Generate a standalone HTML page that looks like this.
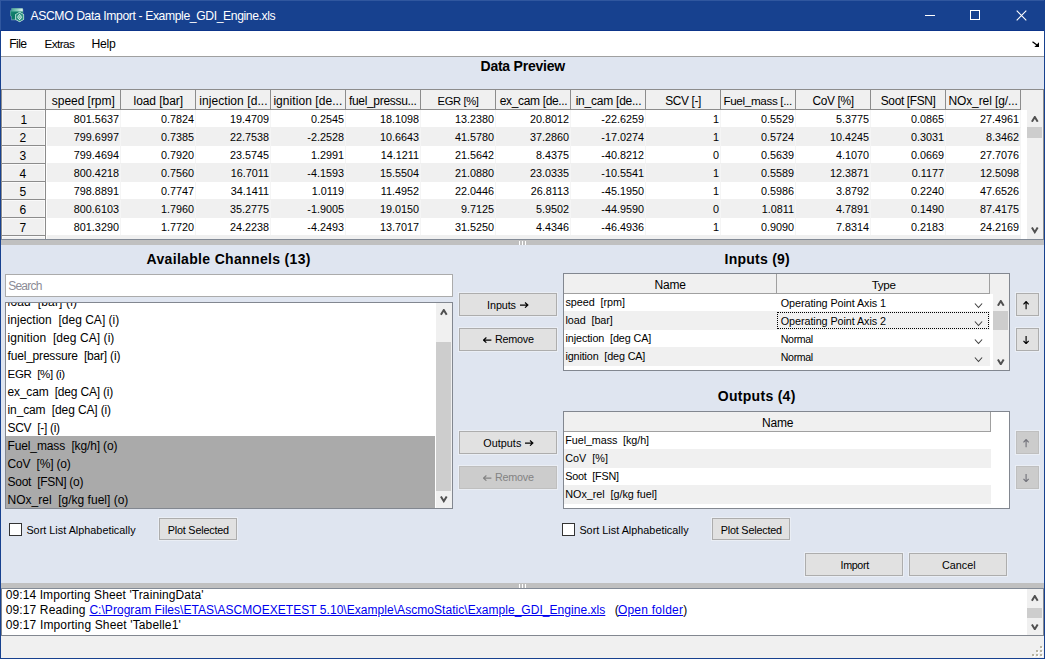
<!DOCTYPE html>
<html>
<head>
<meta charset="utf-8">
<title>ASCMO Data Import</title>
<style>
*{box-sizing:border-box;margin:0;padding:0}
html,body{width:1045px;height:659px;overflow:hidden;background:#dfe5f0}
body{font-family:"Liberation Sans",sans-serif;font-size:11px;color:#000;position:relative}
div,span,svg{position:absolute}
a{color:#0000ee;text-decoration:underline;position:static}
#win{left:0;top:0;width:1045px;height:659px;background:#dfe5f0;overflow:hidden}
#titlebar{left:0;top:0;width:1045px;height:31px;background:#17418f}
#menubar{left:1px;top:31px;width:1043px;height:25px;background:#fff}
#menuline{left:1px;top:56px;width:1043px;height:1px;background:#a0a0a0}
.bl{background:#17418f}
#dt{left:1px;top:89px;width:1043px;height:150px;background:#fff;overflow:hidden}
#dthead{left:0;top:0;width:1043px;height:21px;background:#f0f0f0;border-top:1px solid #8c8c8c}
.hc{top:1px;height:20px;border-right:1px solid #8c8c8c;border-bottom:1px solid #8c8c8c}
.rh{left:1px;width:44px;height:18px;background:#f0f0f0;border-right:1px solid #8c8c8c;border-bottom:1px solid #8c8c8c;box-shadow:inset -1px 0 0 #fafafa,inset 0 1px 0 #fafafa,inset 1px 0 0 #fafafa}
.row{left:45px;width:975px;height:18px}
.row.alt{background:#f0f0f0;box-shadow:inset 1px 0 0 #fff;margin-top:-1px;height:19px}
.row.alt .c{top:1px}
.c{top:0;width:75px;height:18px;text-align:right;padding-right:1.1px;font-size:10.8px;line-height:18px;border-right:1px solid #f5f5f5}
.btn{background:#e1e1e1;border:1px solid #adadad;box-shadow:0 0 0 1px rgba(255,255,255,0.35)}
.btn.dis{background:#cccccc;border-color:#bfbfbf}
.cb{width:13px;height:13px;background:#fff;border:1px solid #333}
.sb{background:#f0f0f0}
.thumb{background:#cdcdcd}
.box{background:#fff;border:1px solid #828790;overflow:hidden}
.th{background:#f0f0f0;border-right:1px solid #a0a0a0;border-bottom:1px solid #a0a0a0;height:20px;top:0}
.tr{height:18px}
.tr.alt{background:#f0f0f0}
</style>
</head>
<body>
<div id="win">
<div id="titlebar"></div>
<div style="left:0;top:30px;width:1045px;height:1px;background:#0d358a"></div>
<div style="left:0;top:0;width:1045px;height:1px;background:#30579f"></div>
<svg style="left:9px;top:7px" width="17" height="17" viewBox="-1 -1 17 17">
<defs>
<linearGradient id="ga" x1="0" y1="0" x2="1" y2="0"><stop offset="0" stop-color="#3fa38f"/><stop offset="0.55" stop-color="#8fd0c1"/><stop offset="1" stop-color="#e9f7f3"/></linearGradient>
<linearGradient id="gb" x1="0" y1="0" x2="1" y2="1"><stop offset="0" stop-color="#1f8d7a"/><stop offset="0.5" stop-color="#0b7765"/><stop offset="1" stop-color="#2e9683"/></linearGradient>
</defs>
<path d="M1.6 0 L12 0 Q13.2 0 13.2 1.2 L13.2 12.2 L1.2 12.2 L1.2 8.4 L0 8 L0 2.8 L1.2 2.2 Z" fill="#cfe9e2" opacity="0.55"/>
<path d="M1.9 0.5 L11.9 0.5 Q12.8 0.5 12.8 1.4 L12.8 11.6 L1.7 11.6 L1.7 8 L0.5 7.7 L0.5 3 L1.7 2.5 Z" fill="url(#gb)"/>
<path d="M1.9 0.5 L11.9 0.5 Q12.8 0.5 12.8 1.4 L12.8 3.6 L0.6 3.6 L0.5 3 L1.7 2.5 Z" fill="url(#ga)"/>
<path d="M9.6 3.8 L14.1 6.4 L14.1 11.6 L9.6 14.2 L5.1 11.6 L5.1 6.4 Z" fill="#d9eee9"/>
<path d="M9.6 4.6 L13.4 6.8 L13.4 11.2 L9.6 13.4 L5.8 11.2 L5.8 6.8 Z" fill="#2d9381"/>
<path d="M9.6 5.6 L12.5 9 L9.6 12.4 L6.7 9 Z" fill="#57ad9c"/>
<g fill="#f2faf8"><rect x="9.1" y="6.2" width="1" height="1"/><rect x="8.1" y="7.4" width="1" height="1"/><rect x="10.1" y="7.4" width="1" height="1"/><rect x="7.3" y="8.6" width="0.9" height="1"/><rect x="9.1" y="8.6" width="1" height="1"/><rect x="10.9" y="8.6" width="1" height="1"/><rect x="8.1" y="9.8" width="1" height="1"/><rect x="10.1" y="9.8" width="1" height="1"/><rect x="9.1" y="11" width="1" height="0.9"/></g>
</svg>
<div style="left:30.50px;top:9px;font-size:12.2px;line-height:14px;white-space:pre;letter-spacing:-0.396px;color:#fff">ASCMO Data Import - Example_GDI_Engine.xls</div>
<svg style="left:925px;top:10px" width="12" height="12" viewBox="0 0 12 12"><rect x="0" y="5" width="10" height="1" fill="#fff"/></svg>
<svg style="left:969px;top:9px" width="12" height="12" viewBox="0 0 12 12"><rect x="1.5" y="1.5" width="9" height="9" fill="none" stroke="#fff" stroke-width="1"/></svg>
<svg style="left:1015.7px;top:9.5px" width="12" height="12" viewBox="0 0 12 12"><path d="M0.7 0.7 L10.3 10.3 M10.3 0.7 L0.7 10.3" stroke="#fff" stroke-width="1.1" fill="none"/></svg>
<div id="menubar"></div><div id="menuline"></div>
<div style="left:9.30px;top:37px;font-size:12.2px;line-height:14px;white-space:pre;letter-spacing:-0.648px">File</div>
<div style="left:44.50px;top:37px;font-size:11.82px;line-height:14px;white-space:pre;letter-spacing:-0.600px">Extras</div>
<div style="left:91.40px;top:37px;font-size:12.2px;line-height:14px;white-space:pre;letter-spacing:-0.259px">Help</div>
<svg style="left:1032px;top:40.5px" width="8" height="7" viewBox="0 0 8 7"><path d="M0.5 0.8 L6.2 5" stroke="#000" stroke-width="1.3" fill="none"/><path d="M7 1.2 L7 6 L2.4 6 Z" fill="#000"/></svg>
<div style="left:480.50px;top:58px;font-size:14px;line-height:16px;white-space:pre;letter-spacing:-0.235px;font-weight:bold">Data Preview</div>
<div id="dt"><div id="dthead"></div>
<div class="hc" style="left:0;width:45px"></div>
<div class="hc" style="left:45px;width:75px"></div>
<div class="hc" style="left:120px;width:75px"></div>
<div class="hc" style="left:195px;width:75px"></div>
<div class="hc" style="left:270px;width:75px"></div>
<div class="hc" style="left:345px;width:75px"></div>
<div class="hc" style="left:420px;width:75px"></div>
<div class="hc" style="left:495px;width:75px"></div>
<div class="hc" style="left:570px;width:75px"></div>
<div class="hc" style="left:645px;width:75px"></div>
<div class="hc" style="left:720px;width:75px"></div>
<div class="hc" style="left:795px;width:75px"></div>
<div class="hc" style="left:870px;width:75px"></div>
<div class="hc" style="left:945px;width:75px"></div>
<div class="rh" style="top:21px"></div>
<div class="row" style="top:21px">
<div class="c" style="left:0px">801.5637</div>
<div class="c" style="left:75px">0.7824</div>
<div class="c" style="left:150px">19.4709</div>
<div class="c" style="left:225px">0.2545</div>
<div class="c" style="left:300px">18.1098</div>
<div class="c" style="left:375px">13.2380</div>
<div class="c" style="left:450px">20.8012</div>
<div class="c" style="left:525px">-22.6259</div>
<div class="c" style="left:600px">1</div>
<div class="c" style="left:675px">0.5529</div>
<div class="c" style="left:750px">5.3775</div>
<div class="c" style="left:825px">0.0865</div>
<div class="c" style="left:900px">27.4961</div>
</div>
<div class="rh" style="top:39px"></div>
<div class="row alt" style="top:39px">
<div class="c" style="left:0px">799.6997</div>
<div class="c" style="left:75px">0.7385</div>
<div class="c" style="left:150px">22.7538</div>
<div class="c" style="left:225px">-2.2528</div>
<div class="c" style="left:300px">10.6643</div>
<div class="c" style="left:375px">41.5780</div>
<div class="c" style="left:450px">37.2860</div>
<div class="c" style="left:525px">-17.0274</div>
<div class="c" style="left:600px">1</div>
<div class="c" style="left:675px">0.5724</div>
<div class="c" style="left:750px">10.4245</div>
<div class="c" style="left:825px">0.3031</div>
<div class="c" style="left:900px">8.3462</div>
</div>
<div class="rh" style="top:57px"></div>
<div class="row" style="top:57px">
<div class="c" style="left:0px">799.4694</div>
<div class="c" style="left:75px">0.7920</div>
<div class="c" style="left:150px">23.5745</div>
<div class="c" style="left:225px">1.2991</div>
<div class="c" style="left:300px">14.1211</div>
<div class="c" style="left:375px">21.5642</div>
<div class="c" style="left:450px">8.4375</div>
<div class="c" style="left:525px">-40.8212</div>
<div class="c" style="left:600px">0</div>
<div class="c" style="left:675px">0.5639</div>
<div class="c" style="left:750px">4.1070</div>
<div class="c" style="left:825px">0.0669</div>
<div class="c" style="left:900px">27.7076</div>
</div>
<div class="rh" style="top:75px"></div>
<div class="row alt" style="top:75px">
<div class="c" style="left:0px">800.4218</div>
<div class="c" style="left:75px">0.7560</div>
<div class="c" style="left:150px">16.7011</div>
<div class="c" style="left:225px">-4.1593</div>
<div class="c" style="left:300px">15.5504</div>
<div class="c" style="left:375px">21.0880</div>
<div class="c" style="left:450px">23.0335</div>
<div class="c" style="left:525px">-10.5541</div>
<div class="c" style="left:600px">1</div>
<div class="c" style="left:675px">0.5589</div>
<div class="c" style="left:750px">12.3871</div>
<div class="c" style="left:825px">0.1177</div>
<div class="c" style="left:900px">12.5098</div>
</div>
<div class="rh" style="top:93px"></div>
<div class="row" style="top:93px">
<div class="c" style="left:0px">798.8891</div>
<div class="c" style="left:75px">0.7747</div>
<div class="c" style="left:150px">34.1411</div>
<div class="c" style="left:225px">1.0119</div>
<div class="c" style="left:300px">11.4952</div>
<div class="c" style="left:375px">22.0446</div>
<div class="c" style="left:450px">26.8113</div>
<div class="c" style="left:525px">-45.1950</div>
<div class="c" style="left:600px">1</div>
<div class="c" style="left:675px">0.5986</div>
<div class="c" style="left:750px">3.8792</div>
<div class="c" style="left:825px">0.2240</div>
<div class="c" style="left:900px">47.6526</div>
</div>
<div class="rh" style="top:111px"></div>
<div class="row alt" style="top:111px">
<div class="c" style="left:0px">800.6103</div>
<div class="c" style="left:75px">1.7960</div>
<div class="c" style="left:150px">35.2775</div>
<div class="c" style="left:225px">-1.9005</div>
<div class="c" style="left:300px">19.0150</div>
<div class="c" style="left:375px">9.7125</div>
<div class="c" style="left:450px">5.9502</div>
<div class="c" style="left:525px">-44.9590</div>
<div class="c" style="left:600px">0</div>
<div class="c" style="left:675px">1.0811</div>
<div class="c" style="left:750px">4.7891</div>
<div class="c" style="left:825px">0.1490</div>
<div class="c" style="left:900px">87.4175</div>
</div>
<div class="rh" style="top:129px"></div>
<div class="row" style="top:129px">
<div class="c" style="left:0px">801.3290</div>
<div class="c" style="left:75px">1.7720</div>
<div class="c" style="left:150px">24.2238</div>
<div class="c" style="left:225px">-4.2493</div>
<div class="c" style="left:300px">13.7017</div>
<div class="c" style="left:375px">31.5250</div>
<div class="c" style="left:450px">4.4346</div>
<div class="c" style="left:525px">-46.4936</div>
<div class="c" style="left:600px">1</div>
<div class="c" style="left:675px">0.9090</div>
<div class="c" style="left:750px">7.8314</div>
<div class="c" style="left:825px">0.2183</div>
<div class="c" style="left:900px">24.2169</div>
</div>
<div class="rh" style="top:147px"></div>
<div class="row alt" style="top:147px">
</div>
<div class="sb" style="left:1026px;top:21px;width:16px;height:129px"></div>
<div class="thumb" style="left:1026px;top:38px;width:15px;height:11px"></div>
<svg style="left:1030px;top:26.5px" width="7.6" height="6.7" viewBox="0 0 7.6 6.7"><polyline points="0.9,5.7 3.8,1.0 6.699999999999999,5.7" fill="none" stroke="#505050" stroke-width="2.0"/></svg>
<svg style="left:1030px;top:138px" width="7.6" height="6.7" viewBox="0 0 7.6 6.7"><polyline points="0.9,0.5 3.8,5.2 6.699999999999999,0.5" fill="none" stroke="#505050" stroke-width="2.0"/></svg>
</div>
<div style="left:51.80px;top:94px;font-size:12.0px;line-height:14px;white-space:pre;letter-spacing:-0.039px">speed [rpm]</div>
<div style="left:133.55px;top:94px;font-size:12.0px;line-height:14px;white-space:pre;letter-spacing:-0.062px">load [bar]</div>
<div style="left:199.20px;top:94px;font-size:12.0px;line-height:14px;white-space:pre;letter-spacing:0.072px">injection [d...</div>
<div style="left:273.40px;top:94px;font-size:12.0px;line-height:14px;white-space:pre;letter-spacing:0.059px">ignition [de...</div>
<div style="left:348.90px;top:94px;font-size:12.0px;line-height:14px;white-space:pre;letter-spacing:-0.313px">fuel_pressu...</div>
<div style="left:437.60px;top:94px;font-size:11.18px;line-height:14px;white-space:pre;letter-spacing:-0.352px">EGR [%]</div>
<div style="left:499.70px;top:94px;font-size:12.0px;line-height:14px;white-space:pre;letter-spacing:-0.338px">ex_cam [de...</div>
<div style="left:575.70px;top:94px;font-size:12.0px;line-height:14px;white-space:pre;letter-spacing:-0.236px">in_cam [de...</div>
<div style="left:665.15px;top:94px;font-size:11.91px;line-height:14px;white-space:pre;letter-spacing:-0.351px">SCV [-]</div>
<div style="left:723.40px;top:94px;font-size:11.69px;line-height:14px;white-space:pre;letter-spacing:-0.349px">Fuel_mass [...</div>
<div style="left:812.50px;top:94px;font-size:11.91px;line-height:14px;white-space:pre;letter-spacing:-0.352px">CoV [%]</div>
<div style="left:880.80px;top:94px;font-size:11.88px;line-height:14px;white-space:pre;letter-spacing:-0.348px">Soot [FSN]</div>
<div style="left:948.40px;top:94px;font-size:12.0px;line-height:14px;white-space:pre;letter-spacing:-0.093px">NOx_rel [g/...</div>
<div style="left:20.45px;top:113px;font-size:12px;line-height:14px;white-space:pre">1</div>
<div style="left:19.45px;top:131px;font-size:12px;line-height:14px;white-space:pre">2</div>
<div style="left:19.45px;top:149px;font-size:12px;line-height:14px;white-space:pre">3</div>
<div style="left:19.45px;top:167px;font-size:12px;line-height:14px;white-space:pre">4</div>
<div style="left:19.45px;top:185px;font-size:12px;line-height:14px;white-space:pre">5</div>
<div style="left:19.45px;top:203px;font-size:12px;line-height:14px;white-space:pre">6</div>
<div style="left:19.45px;top:221px;font-size:12px;line-height:14px;white-space:pre">7</div>
<div style="left:1px;top:89px;width:1px;height:150px;background:#8e8e8e"></div>
<div style="left:1043px;top:89px;width:1px;height:150px;background:#8e8e8e"></div>
<div style="left:1px;top:239px;width:1043px;height:1px;background:#828a96"></div>
<div style="left:1px;top:240px;width:1043px;height:5px;background:#c0c0c0"></div>
<div style="left:519px;top:241px;width:1px;height:4px;background:#fff"></div>
<div style="left:522px;top:241px;width:1px;height:4px;background:#fff"></div>
<div style="left:525px;top:241px;width:1px;height:4px;background:#fff"></div>
<div style="left:146.50px;top:251px;font-size:14px;line-height:16px;white-space:pre;letter-spacing:0.333px;font-weight:bold">Available Channels (13)</div>
<div style="left:5px;top:274px;width:448px;height:23px;background:#fff;border:1px solid #ababab"></div>
<div style="left:8.20px;top:279px;font-size:12.0px;line-height:14px;white-space:pre;letter-spacing:-0.782px;color:#8c8c96">Search</div>
<div class="box" style="left:5px;top:302px;width:448px;height:207px">
<div style="left:0;top:133px;width:429px;height:72px;background:#aaaaaa"></div>
<div class="sb" style="left:430px;top:0;width:16px;height:205px"></div>
<div class="thumb" style="left:430px;top:39px;width:15px;height:149px"></div>
<svg style="left:434px;top:6px" width="7.6" height="6.7" viewBox="0 0 7.6 6.7"><polyline points="0.9,5.7 3.8,1.0 6.699999999999999,5.7" fill="none" stroke="#505050" stroke-width="2.0"/></svg>
<svg style="left:434px;top:193px" width="7.6" height="6.7" viewBox="0 0 7.6 6.7"><polyline points="0.9,0.5 3.8,5.2 6.699999999999999,0.5" fill="none" stroke="#505050" stroke-width="2.0"/></svg>
</div>
<div style="left:6px;top:303px;width:430px;height:205px;overflow:hidden">
<div style="left:1.60px;top:-8px;font-size:12.0px;line-height:14px;white-space:pre;letter-spacing:0.144px">load  [bar] (i)</div>
<div style="left:1.60px;top:10px;font-size:12.0px;line-height:14px;white-space:pre;letter-spacing:0.013px">injection  [deg CA] (i)</div>
<div style="left:1.60px;top:28px;font-size:12.0px;line-height:14px;white-space:pre;letter-spacing:0.066px">ignition  [deg CA] (i)</div>
<div style="left:1.60px;top:46px;font-size:12.0px;line-height:14px;white-space:pre;letter-spacing:-0.200px">fuel_pressure  [bar] (i)</div>
<div style="left:1.60px;top:64px;font-size:11.52px;line-height:14px;white-space:pre;letter-spacing:-0.351px">EGR  [%] (i)</div>
<div style="left:1.60px;top:82px;font-size:12.0px;line-height:14px;white-space:pre;letter-spacing:-0.195px">ex_cam  [deg CA] (i)</div>
<div style="left:1.60px;top:100px;font-size:12.0px;line-height:14px;white-space:pre;letter-spacing:-0.135px">in_cam  [deg CA] (i)</div>
<div style="left:1.60px;top:118px;font-size:12.0px;line-height:14px;white-space:pre;letter-spacing:-0.320px">SCV  [-] (i)</div>
<div style="left:1.60px;top:136px;font-size:12.0px;line-height:14px;white-space:pre;letter-spacing:-0.142px">Fuel_mass  [kg/h] (o)</div>
<div style="left:1.60px;top:154px;font-size:12.0px;line-height:14px;white-space:pre;letter-spacing:-0.207px">CoV  [%] (o)</div>
<div style="left:1.60px;top:172px;font-size:12.0px;line-height:14px;white-space:pre;letter-spacing:-0.303px">Soot  [FSN] (o)</div>
<div style="left:1.60px;top:190px;font-size:12.0px;line-height:14px;white-space:pre">NOx_rel  [g/kg fuel] (o)</div>
</div>
<div class="cb" style="left:9px;top:523px"></div>
<div style="left:26.40px;top:523.5px;font-size:10.8px;line-height:12px;white-space:pre;letter-spacing:0.023px">Sort List Alphabetically</div>
<div class="btn" style="left:159px;top:518px;width:78px;height:22px"></div>
<div style="left:167.70px;top:523.5px;font-size:10.8px;line-height:12px;white-space:pre;letter-spacing:-0.186px">Plot Selected</div>
<div class="btn" style="left:459px;top:293px;width:98px;height:23px"></div>
<div style="left:487.10px;top:298.5px;font-size:10.8px;line-height:12px;white-space:pre;letter-spacing:-0.104px">Inputs</div>
<svg style="left:519.70px;top:302.30px" width="8.9" height="6.2" viewBox="0 0 8.9 6.2"><path d="M0 3.1 L7.800000000000001 3.1 M5.0 0.5 L7.9 3.1 L5.0 5.7" fill="none" stroke="#000" stroke-width="1.15"/></svg>
<div class="btn" style="left:459px;top:328px;width:98px;height:23px"></div>
<div style="left:495.00px;top:333.3px;font-size:10.8px;line-height:12px;white-space:pre;letter-spacing:-0.241px">Remove</div>
<svg style="left:482.90px;top:337.20px" width="8.9" height="6.2" viewBox="0 0 8.9 6.2"><path d="M8.4 3.1 L0.6 3.1 M3.4 0.5 L0.5 3.1 L3.4 5.7" fill="none" stroke="#000" stroke-width="1.15"/></svg>
<div class="btn" style="left:459px;top:431px;width:98px;height:23px"></div>
<div style="left:483.20px;top:436.5px;font-size:10.8px;line-height:12px;white-space:pre;letter-spacing:0.046px">Outputs</div>
<svg style="left:525.00px;top:440.30px" width="8.9" height="6.2" viewBox="0 0 8.9 6.2"><path d="M0 3.1 L7.800000000000001 3.1 M5.0 0.5 L7.9 3.1 L5.0 5.7" fill="none" stroke="#000" stroke-width="1.15"/></svg>
<div class="btn dis" style="left:459px;top:466px;width:98px;height:23px"></div>
<div style="left:495.00px;top:471.3px;font-size:10.8px;line-height:12px;white-space:pre;letter-spacing:-0.241px;color:#838383">Remove</div>
<svg style="left:482.90px;top:475.20px" width="8.9" height="6.2" viewBox="0 0 8.9 6.2"><path d="M8.4 3.1 L0.6 3.1 M3.4 0.5 L0.5 3.1 L3.4 5.7" fill="none" stroke="#838383" stroke-width="1.15"/></svg>
<div style="left:724.60px;top:251px;font-size:14px;line-height:16px;white-space:pre;letter-spacing:0.242px;font-weight:bold">Inputs (9)</div>
<div class="box" style="left:563px;top:273px;width:447px;height:98px">
<div class="th" style="left:0;width:213px"></div>
<div class="th" style="left:213px;width:213px"></div>
<div style="left:426px;top:0;width:19px;height:20px;background:#f0f0f0"></div>
<div class="tr" style="left:0;top:20px;width:426px;height:18px"></div>
<svg style="left:410.4px;top:29px" width="9" height="6" viewBox="0 0 9 6"><polyline points="0.9,0.5 4.5,4.5 8.1,0.5" fill="none" stroke="#404040" stroke-width="1.1"/></svg>
<div class="tr alt" style="left:0;top:37px;width:426px;height:19px"></div>
<svg style="left:410.4px;top:47px" width="9" height="6" viewBox="0 0 9 6"><polyline points="0.9,0.5 4.5,4.5 8.1,0.5" fill="none" stroke="#404040" stroke-width="1.1"/></svg>
<div class="tr" style="left:0;top:56px;width:426px;height:18px"></div>
<svg style="left:410.4px;top:65px" width="9" height="6" viewBox="0 0 9 6"><polyline points="0.9,0.5 4.5,4.5 8.1,0.5" fill="none" stroke="#404040" stroke-width="1.1"/></svg>
<div class="tr alt" style="left:0;top:73px;width:426px;height:19px"></div>
<svg style="left:410.4px;top:83px" width="9" height="6" viewBox="0 0 9 6"><polyline points="0.9,0.5 4.5,4.5 8.1,0.5" fill="none" stroke="#404040" stroke-width="1.1"/></svg>
<div class="tr" style="left:0;top:92px;width:426px;height:18px"></div>
<div style="left:213px;top:38px;width:212px;height:17px;border:1px dotted #000"></div>
<div class="sb" style="left:429px;top:20px;width:16px;height:76px"></div>
<div class="thumb" style="left:429px;top:37px;width:15px;height:19px"></div>
<svg style="left:433px;top:25.5px" width="7.6" height="6.7" viewBox="0 0 7.6 6.7"><polyline points="0.9,5.7 3.8,1.0 6.699999999999999,5.7" fill="none" stroke="#505050" stroke-width="2.0"/></svg>
<svg style="left:433px;top:84.5px" width="7.6" height="6.7" viewBox="0 0 7.6 6.7"><polyline points="0.9,0.5 3.8,5.2 6.699999999999999,0.5" fill="none" stroke="#505050" stroke-width="2.0"/></svg>
</div>
<div style="left:654.60px;top:278px;font-size:12.0px;line-height:14px;white-space:pre;letter-spacing:-0.232px">Name</div>
<div style="left:871.70px;top:278px;font-size:11.65px;line-height:14px;white-space:pre;letter-spacing:-0.348px">Type</div>
<div style="left:565.50px;top:296px;font-size:10.8px;line-height:12px;white-space:pre;letter-spacing:-0.050px">speed  [rpm]</div>
<div style="left:780.80px;top:297px;font-size:10.8px;line-height:12px;white-space:pre;letter-spacing:-0.079px">Operating Point Axis 1</div>
<div style="left:565.50px;top:314px;font-size:10.8px;line-height:12px;white-space:pre;letter-spacing:-0.075px">load  [bar]</div>
<div style="left:780.80px;top:315px;font-size:10.8px;line-height:12px;white-space:pre;letter-spacing:-0.079px">Operating Point Axis 2</div>
<div style="left:565.50px;top:332px;font-size:10.8px;line-height:12px;white-space:pre;letter-spacing:-0.099px">injection  [deg CA]</div>
<div style="left:780.80px;top:333px;font-size:10.6px;line-height:12px;white-space:pre;letter-spacing:-0.348px">Normal</div>
<div style="left:565.50px;top:350px;font-size:10.8px;line-height:12px;white-space:pre;letter-spacing:-0.140px">ignition  [deg CA]</div>
<div style="left:780.80px;top:351px;font-size:10.6px;line-height:12px;white-space:pre;letter-spacing:-0.348px">Normal</div>
<div class="btn" style="left:1016px;top:293px;width:23px;height:23px"></div>
<svg style="left:1023.40px;top:301.00px" width="6.2" height="8.7" viewBox="0 0 6.2 8.7"><path d="M3.1 8.2 L3.1 0.6 M0.5 3.4 L3.1 0.5 L5.7 3.4" fill="none" stroke="#000" stroke-width="1.15"/></svg>
<div class="btn" style="left:1016px;top:328px;width:23px;height:23px"></div>
<svg style="left:1023.40px;top:335.70px" width="6.2" height="8.7" viewBox="0 0 6.2 8.7"><path d="M3.1 0 L3.1 7.6 M0.5 4.799999999999999 L3.1 7.699999999999999 L5.7 4.799999999999999" fill="none" stroke="#000" stroke-width="1.15"/></svg>
<div style="left:717.80px;top:388px;font-size:14px;line-height:16px;white-space:pre;letter-spacing:0.291px;font-weight:bold">Outputs (4)</div>
<div class="box" style="left:563px;top:411px;width:447px;height:98px">
<div class="th" style="left:0;width:427px"></div>
<div class="tr" style="left:0;top:20px;width:427px;height:18px"></div>
<div class="tr alt" style="left:0;top:37px;width:427px;height:19px"></div>
<div class="tr" style="left:0;top:56px;width:427px;height:18px"></div>
<div class="tr alt" style="left:0;top:73px;width:427px;height:19px"></div>
</div>
<div style="left:762.00px;top:416px;font-size:12.0px;line-height:14px;white-space:pre;letter-spacing:-0.166px">Name</div>
<div style="left:565.30px;top:434px;font-size:10.8px;line-height:12px;white-space:pre;letter-spacing:-0.091px">Fuel_mass  [kg/h]</div>
<div style="left:565.30px;top:452px;font-size:10.8px;line-height:12px;white-space:pre;letter-spacing:0.009px">CoV  [%]</div>
<div style="left:565.30px;top:470px;font-size:10.8px;line-height:12px;white-space:pre;letter-spacing:-0.214px">Soot  [FSN]</div>
<div style="left:565.30px;top:488px;font-size:10.8px;line-height:12px;white-space:pre;letter-spacing:-0.035px">NOx_rel  [g/kg fuel]</div>
<div class="btn dis" style="left:1016px;top:431px;width:23px;height:23px"></div>
<svg style="left:1023.40px;top:439.00px" width="6.2" height="8.7" viewBox="0 0 6.2 8.7"><path d="M3.1 8.2 L3.1 0.6 M0.5 3.4 L3.1 0.5 L5.7 3.4" fill="none" stroke="#74747c" stroke-width="1.15"/></svg>
<div class="btn dis" style="left:1016px;top:466px;width:23px;height:23px"></div>
<svg style="left:1023.40px;top:473.70px" width="6.2" height="8.7" viewBox="0 0 6.2 8.7"><path d="M3.1 0 L3.1 7.6 M0.5 4.799999999999999 L3.1 7.699999999999999 L5.7 4.799999999999999" fill="none" stroke="#74747c" stroke-width="1.15"/></svg>
<div class="cb" style="left:562px;top:523px"></div>
<div style="left:579.40px;top:523.5px;font-size:10.8px;line-height:12px;white-space:pre;letter-spacing:0.023px">Sort List Alphabetically</div>
<div class="btn" style="left:712px;top:518px;width:78px;height:22px"></div>
<div style="left:720.70px;top:523.5px;font-size:10.8px;line-height:12px;white-space:pre;letter-spacing:-0.186px">Plot Selected</div>
<div class="btn" style="left:805px;top:553px;width:98px;height:23px"></div>
<div style="left:840.50px;top:559.2px;font-size:10.74px;line-height:12px;white-space:pre;letter-spacing:-0.352px">Import</div>
<div class="btn" style="left:909px;top:553px;width:98px;height:23px"></div>
<div style="left:942.10px;top:559.2px;font-size:10.8px;line-height:12px;white-space:pre;letter-spacing:-0.019px">Cancel</div>
<div style="left:1px;top:583px;width:1043px;height:5px;background:#c0c0c0"></div>
<div style="left:1px;top:588px;width:1043px;height:1px;background:#828a96"></div>
<div style="left:519px;top:584px;width:1px;height:4px;background:#fff"></div>
<div style="left:522px;top:584px;width:1px;height:4px;background:#fff"></div>
<div style="left:525px;top:584px;width:1px;height:4px;background:#fff"></div>
<div style="left:1px;top:589px;width:1043px;height:46px;background:#fff;overflow:hidden">
<div class="sb" style="left:1026px;top:0;width:16px;height:46px"></div>
<div class="thumb" style="left:1026px;top:19px;width:15px;height:10px"></div>
<svg style="left:1030px;top:6px" width="7.6" height="6.7" viewBox="0 0 7.6 6.7"><polyline points="0.9,5.7 3.8,1.0 6.699999999999999,5.7" fill="none" stroke="#505050" stroke-width="2.0"/></svg>
<svg style="left:1030px;top:34.6px" width="7.6" height="6.7" viewBox="0 0 7.6 6.7"><polyline points="0.9,0.5 3.8,5.2 6.699999999999999,0.5" fill="none" stroke="#505050" stroke-width="2.0"/></svg>
</div>
<div style="left:5.70px;top:588px;font-size:12px;line-height:14px;white-space:pre;letter-spacing:0.104px">09:14 Importing Sheet 'TrainingData'</div>
<div style="left:5.70px;top:603px;font-size:12px;line-height:14px;white-space:pre;letter-spacing:0.137px">09:17 Reading</div>
<div style="left:89.40px;top:603px;font-size:12px;line-height:14px;white-space:pre;letter-spacing:0.043px;color:#0000ee;text-decoration:underline">C:\Program Files\ETAS\ASCMOEXETEST 5.10\Example\AscmoStatic\Example_GDI_Engine.xls</div>
<div style="left:614.70px;top:603px;font-size:12px;line-height:14px;white-space:pre">(</div>
<div style="left:617.90px;top:603px;font-size:12px;line-height:14px;white-space:pre;letter-spacing:0.237px;color:#0000ee;text-decoration:underline">Open folder</div>
<div style="left:683.20px;top:603px;font-size:12px;line-height:14px;white-space:pre">)</div>
<div style="left:5.70px;top:618px;font-size:12px;line-height:14px;white-space:pre;letter-spacing:0.142px">09:17 Importing Sheet 'Tabelle1'</div>
<div style="left:1px;top:635px;width:1043px;height:1px;background:#828790"></div>
<div style="left:1px;top:636px;width:1043px;height:22px;background:#f0f0f0"></div>
<div style="left:1041px;top:655px;width:2px;height:2px;background:#fff"></div>
<div style="left:1040px;top:654px;width:2px;height:2px;background:#b8b4a2"></div>
<div style="left:1037px;top:655px;width:2px;height:2px;background:#fff"></div>
<div style="left:1036px;top:654px;width:2px;height:2px;background:#b8b4a2"></div>
<div style="left:1041px;top:651px;width:2px;height:2px;background:#fff"></div>
<div style="left:1040px;top:650px;width:2px;height:2px;background:#b8b4a2"></div>
<div style="left:1033px;top:655px;width:2px;height:2px;background:#fff"></div>
<div style="left:1032px;top:654px;width:2px;height:2px;background:#b8b4a2"></div>
<div style="left:1037px;top:651px;width:2px;height:2px;background:#fff"></div>
<div style="left:1036px;top:650px;width:2px;height:2px;background:#b8b4a2"></div>
<div style="left:1041px;top:647px;width:2px;height:2px;background:#fff"></div>
<div style="left:1040px;top:646px;width:2px;height:2px;background:#b8b4a2"></div>
<div style="left:1043px;top:589px;width:1px;height:47px;background:#828790"></div>
<div style="left:1px;top:589px;width:1px;height:47px;background:#828790"></div>
<div class="bl" style="left:0;top:0;width:1px;height:659px"></div>
<div style="left:0;top:0;width:1px;height:30px;background:#30579f"></div>
<div class="bl" style="left:1044px;top:0;width:1px;height:659px"></div>
<div class="bl" style="left:0;top:658px;width:1045px;height:1px"></div>
</div>
</body>
</html>
